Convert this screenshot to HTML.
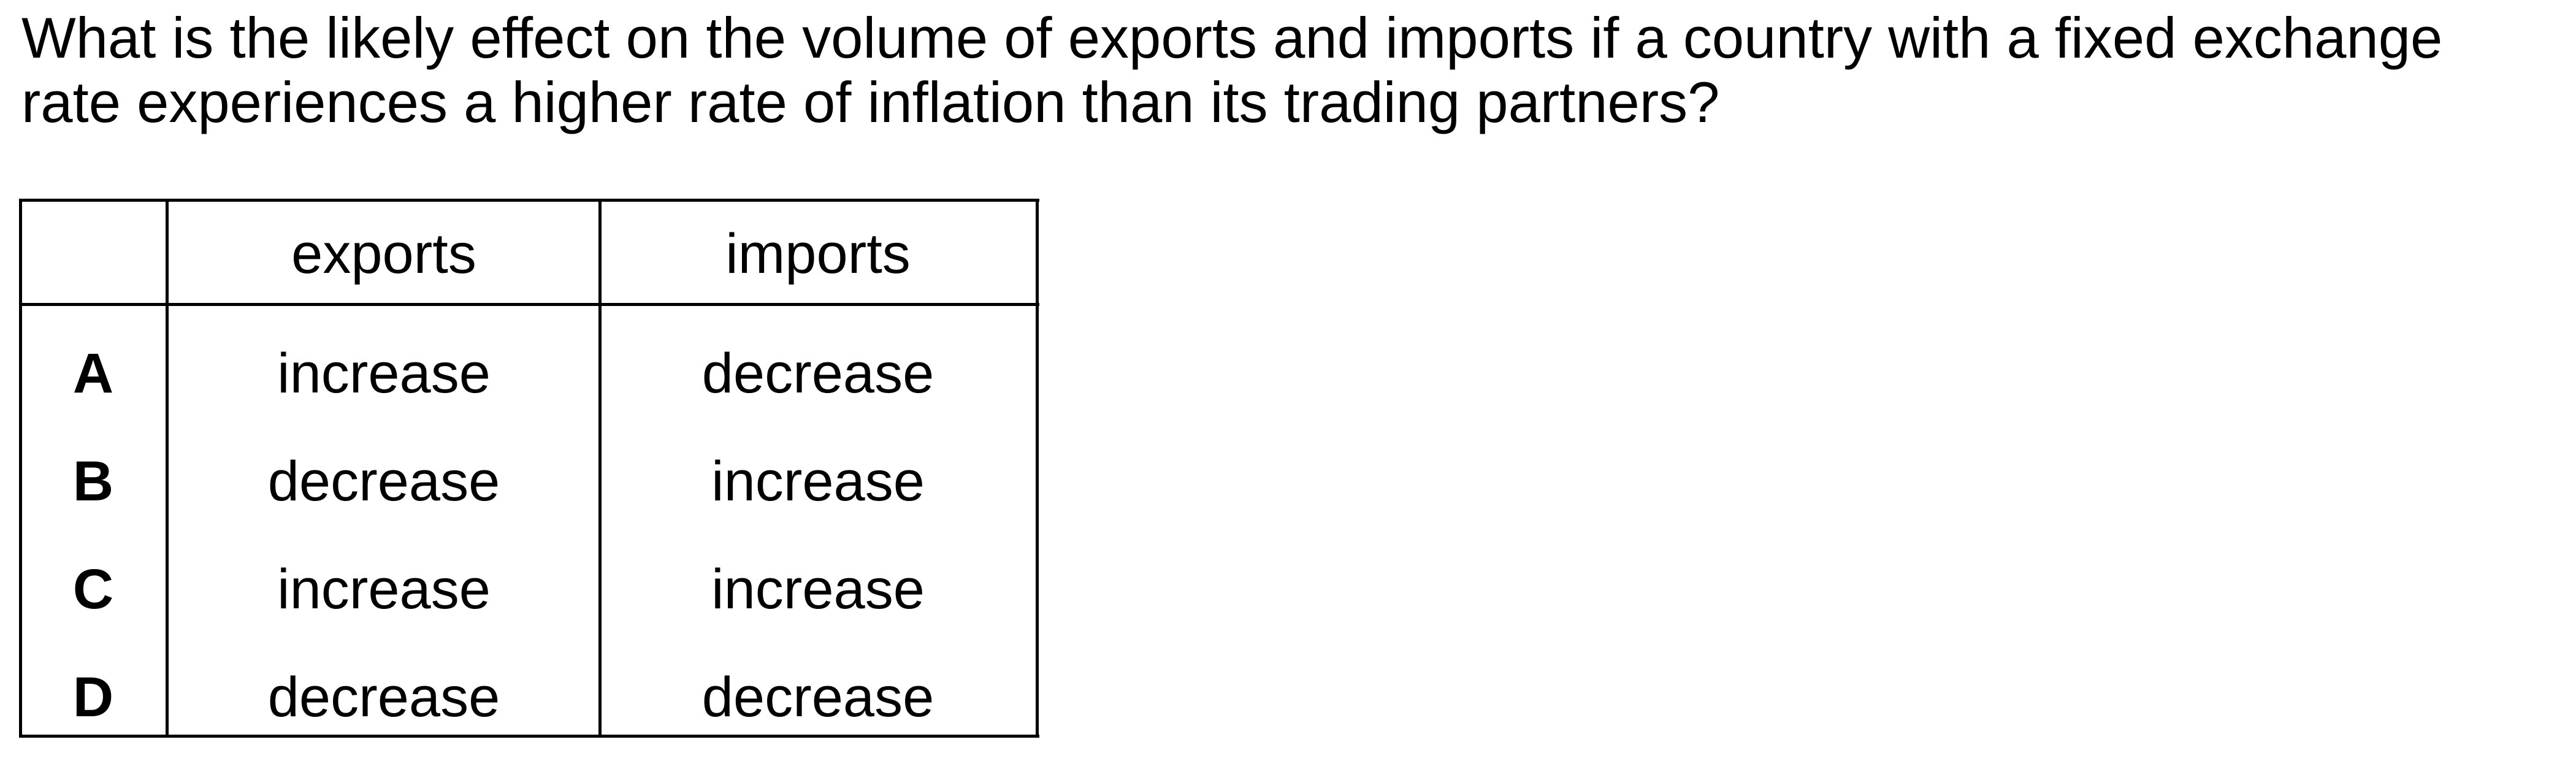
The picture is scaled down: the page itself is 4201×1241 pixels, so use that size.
<!DOCTYPE html>
<html><head><meta charset="utf-8"><style>
html,body{margin:0;padding:0;background:#fff;}
body{width:4201px;height:1241px;position:relative;overflow:hidden;font-family:"Liberation Sans",Arial,sans-serif;color:#000;}
.t{position:absolute;font-size:94px;line-height:94px;white-space:nowrap;}
.c{position:absolute;font-size:92px;line-height:92px;white-space:nowrap;transform:translateX(-50%);}
.b{font-weight:bold;}
.h{position:absolute;background:#000;height:5px;}
.v{position:absolute;background:#000;width:5px;}
</style></head><body>
<div class="t" style="left:35px;top:15px;">What is the likely effect on the volume of exports and imports if a country with a fixed exchange</div>
<div class="t" style="left:35px;top:120px;">rate experiences a higher rate of inflation than its trading partners?</div>

<div class="h" style="left:31px;top:324px;width:1664px;"></div>
<div class="h" style="left:31px;top:494px;width:1664px;"></div>
<div class="h" style="left:31px;top:1198px;width:1664px;"></div>
<div class="v" style="left:31px;top:324px;height:879px;"></div>
<div class="v" style="left:270px;top:324px;height:879px;"></div>
<div class="v" style="left:976px;top:324px;height:879px;"></div>
<div class="v" style="left:1689px;top:324px;height:879px;"></div>

<div class="c" style="left:626px;top:368px;">exports</div>
<div class="c" style="left:1334px;top:368px;">imports</div>

<div class="c b" style="left:152px;top:563px;">A</div>
<div class="c" style="left:626px;top:563px;">increase</div>
<div class="c" style="left:1334px;top:563px;">decrease</div>

<div class="c b" style="left:152px;top:739px;">B</div>
<div class="c" style="left:626px;top:739px;">decrease</div>
<div class="c" style="left:1334px;top:739px;">increase</div>

<div class="c b" style="left:152px;top:915px;">C</div>
<div class="c" style="left:626px;top:915px;">increase</div>
<div class="c" style="left:1334px;top:915px;">increase</div>

<div class="c b" style="left:152px;top:1091px;">D</div>
<div class="c" style="left:626px;top:1091px;">decrease</div>
<div class="c" style="left:1334px;top:1091px;">decrease</div>
</body></html>
